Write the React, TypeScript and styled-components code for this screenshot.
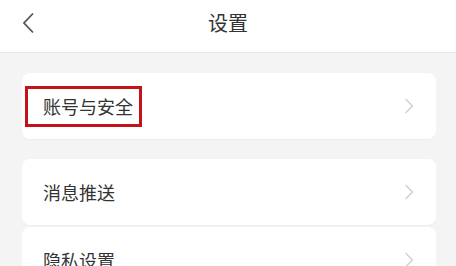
import styled, { createGlobalStyle } from "styled-components";

const GlobalStyle = createGlobalStyle`
  html, body {
    margin: 0;
    padding: 0;
    background: #f4f4f4;
    font-family: "Noto Sans CJK SC", "Noto Sans", sans-serif;
  }
`;

const Page = styled.div`
  width: 456px;
  min-height: 266px;
  background: #f4f4f4;
`;

const Header = styled.header`
  height: 52px;
  background: #fff;
  border-bottom: 1px solid #e6e6e6;
  display: flex;
  align-items: center;
  justify-content: center;
  position: relative;
`;

const BackButton = styled.button`
  position: absolute;
  left: 20px;
  top: 10px;
  width: 18px;
  height: 26px;
  padding: 0;
  border: none;
  background: none;
  display: flex;
  align-items: center;
  justify-content: center;
`;

const Title = styled.h1`
  margin: 0;
  font-size: 20px;
  font-weight: 400;
  color: #333;
  line-height: 1;
  margin-top: -6px;
`;

const List = styled.div`
  display: flex;
  flex-direction: column;
  padding: 20px 20px 0 22px;
`;

const Card = styled.div<{ $gap: number }>`
  height: 66px;
  margin-bottom: ${(p) => p.$gap}px;
  background: #fff;
  border-radius: 8px;
  display: flex;
  align-items: center;
  justify-content: space-between;
  padding: 0 22px 0 21px;
  box-shadow: 0 1px 1px rgba(0, 0, 0, 0.03);
`;

const Label = styled.span<{ $highlight?: boolean }>`
  font-size: 18px;
  color: #333;
  line-height: 35px;
  ${(p) =>
    p.$highlight &&
    `
    border: 3px solid #c4121b;
    padding: 0 6px 0 15px;
    margin-left: -18px;
    margin-top: 1px;
  `}
`;

const Chevron = () => (
  <svg width="10" height="16" viewBox="0 0 10 16">
    <path d="M1.5 1 L8.5 8 L1.5 15" fill="none" stroke="#cfcfcf" strokeWidth="1.4" />
  </svg>
);

const items = [
  { label: "账号与安全", highlight: true, gap: 20 },
  { label: "消息推送", gap: 2 },
  { label: "隐私设置", gap: 0 },
];

export default function App() {
  return (
    <Page>
      <GlobalStyle />
      <Header>
        <BackButton>
          <svg width="14" height="22" viewBox="0 0 14 22">
            <path d="M11 1.5 L2 11 L11 20.5" fill="none" stroke="#555" strokeWidth="1.8" />
          </svg>
        </BackButton>
        <Title>设置</Title>
      </Header>
      <List>
        {items.map((it) => (
          <Card key={it.label} $gap={it.gap}>
            <Label $highlight={it.highlight}>{it.label}</Label>
            <Chevron />
          </Card>
        ))}
      </List>
    </Page>
  );
}
